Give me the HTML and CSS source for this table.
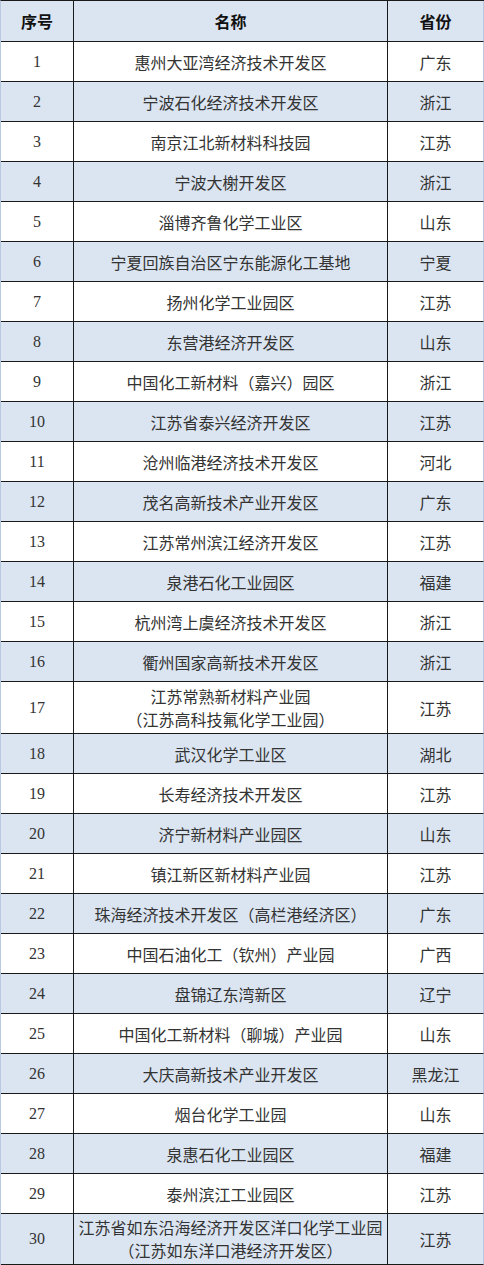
FILE: index.html
```html
<!DOCTYPE html>
<html lang="zh-CN">
<head>
<meta charset="utf-8">
<title>化工园区</title>
<link rel="stylesheet" href="styles.css">
</head>
<body>
<table class="parks">
  <colgroup><col class="c-no"><col class="c-name"><col class="c-prov"></colgroup>
  <thead>
    <tr class="head"><th>序号</th><th>名称</th><th>省份</th></tr>
  </thead>
  <tbody>
    <tr><td class="no">1</td><td>惠州大亚湾经济技术开发区</td><td>广东</td></tr>
    <tr class="alt"><td class="no">2</td><td>宁波石化经济技术开发区</td><td>浙江</td></tr>
    <tr><td class="no">3</td><td>南京江北新材料科技园</td><td>江苏</td></tr>
    <tr class="alt"><td class="no">4</td><td>宁波大榭开发区</td><td>浙江</td></tr>
    <tr><td class="no">5</td><td>淄博齐鲁化学工业区</td><td>山东</td></tr>
    <tr class="alt"><td class="no">6</td><td>宁夏回族自治区宁东能源化工基地</td><td>宁夏</td></tr>
    <tr><td class="no">7</td><td>扬州化学工业园区</td><td>江苏</td></tr>
    <tr class="alt"><td class="no">8</td><td>东营港经济开发区</td><td>山东</td></tr>
    <tr><td class="no">9</td><td>中国化工新材料（嘉兴）园区</td><td>浙江</td></tr>
    <tr class="alt"><td class="no">10</td><td>江苏省泰兴经济开发区</td><td>江苏</td></tr>
    <tr><td class="no">11</td><td>沧州临港经济技术开发区</td><td>河北</td></tr>
    <tr class="alt"><td class="no">12</td><td>茂名高新技术产业开发区</td><td>广东</td></tr>
    <tr><td class="no">13</td><td>江苏常州滨江经济开发区</td><td>江苏</td></tr>
    <tr class="alt"><td class="no">14</td><td>泉港石化工业园区</td><td>福建</td></tr>
    <tr><td class="no">15</td><td>杭州湾上虞经济技术开发区</td><td>浙江</td></tr>
    <tr class="alt"><td class="no">16</td><td>衢州国家高新技术开发区</td><td>浙江</td></tr>
    <tr class="tall"><td class="no">17</td><td class="two">江苏常熟新材料产业园<br>（江苏高科技氟化学工业园）</td><td>江苏</td></tr>
    <tr class="alt"><td class="no">18</td><td>武汉化学工业区</td><td>湖北</td></tr>
    <tr><td class="no">19</td><td>长寿经济技术开发区</td><td>江苏</td></tr>
    <tr class="alt"><td class="no">20</td><td>济宁新材料产业园区</td><td>山东</td></tr>
    <tr><td class="no">21</td><td>镇江新区新材料产业园</td><td>江苏</td></tr>
    <tr class="alt"><td class="no">22</td><td>珠海经济技术开发区（高栏港经济区）</td><td>广东</td></tr>
    <tr><td class="no">23</td><td>中国石油化工（钦州）产业园</td><td>广西</td></tr>
    <tr class="alt"><td class="no">24</td><td>盘锦辽东湾新区</td><td>辽宁</td></tr>
    <tr><td class="no">25</td><td>中国化工新材料（聊城）产业园</td><td>山东</td></tr>
    <tr class="alt"><td class="no">26</td><td>大庆高新技术产业开发区</td><td>黑龙江</td></tr>
    <tr><td class="no">27</td><td>烟台化学工业园</td><td>山东</td></tr>
    <tr class="alt"><td class="no">28</td><td>泉惠石化工业园区</td><td>福建</td></tr>
    <tr><td class="no">29</td><td>泰州滨江工业园区</td><td>江苏</td></tr>
    <tr class="alt last"><td class="no">30</td><td class="two">江苏省如东沿海经济开发区洋口化学工业园<br>（江苏如东洋口港经济开发区）</td><td>江苏</td></tr>
  </tbody>
</table>
</body>
</html>
```

FILE: styles.css
```css
html, body {
  margin: 0;
  padding: 0;
  background: #ffffff;
}

.parks {
  width: 484px;
  border-collapse: separate;
  border-spacing: 0;
  table-layout: fixed;
  border-left: 1px solid #b9c9df;
  border-top: 1px solid #1a1a1a;
  font-family: "Noto Sans CJK SC", "Noto Sans", sans-serif;
  font-size: 16px;
  color: #333333;
}

.c-no { width: 73px; }
.c-name { width: 314px; }
.c-prov { width: 96px; }

.parks th,
.parks td {
  box-sizing: border-box;
  padding: 0 1px;
  text-align: center;
  vertical-align: middle;
  border-right: 1px solid #1a1a1a;
  border-bottom: 1px solid #1a1a1a;
  height: 40px;
  line-height: 20px;
  white-space: nowrap;
}

.parks th:last-child,
.parks td:last-child {
  border-right-color: #b9c9df;
}

.head th {
  height: 41px;
  background: #dbe5f1;
  color: #111111;
  font-weight: 700;
}

.alt td {
  background: #dbe5f1;
}

.tall td {
  height: 52px;
}

.last td {
  height: 51px;
}

.parks td.two {
  line-height: 23px;
}

.parks td.no {
  font-family: "Liberation Serif", "DejaVu Serif", serif;
  font-size: 16px;
}
```
